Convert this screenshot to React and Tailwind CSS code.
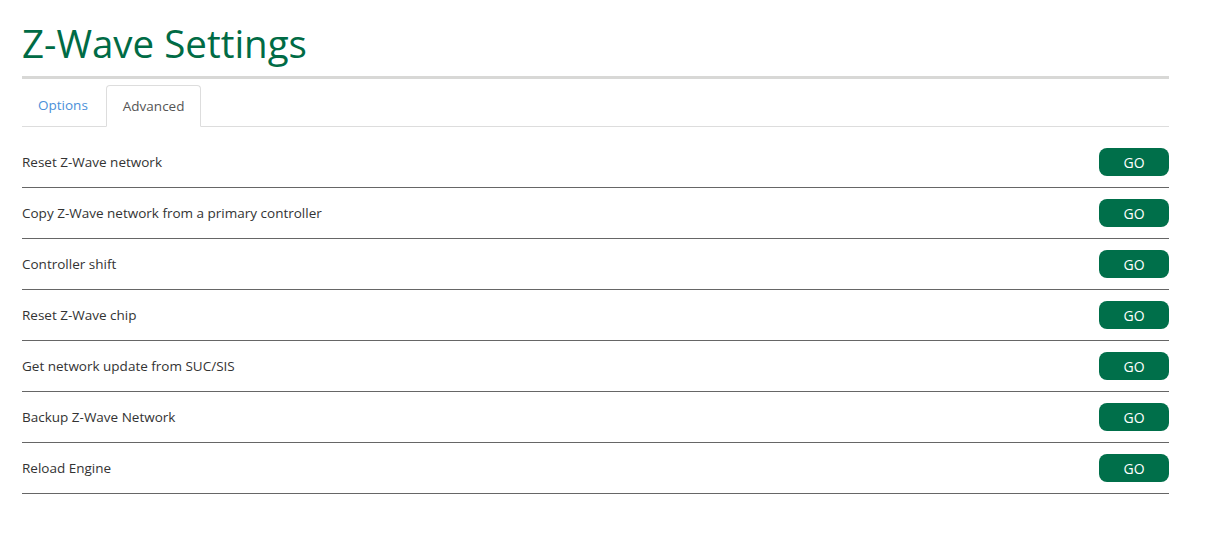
import React from "react";

const rows = [
  "Reset Z-Wave network",
  "Copy Z-Wave network from a primary controller",
  "Controller shift",
  "Reset Z-Wave chip",
  "Get network update from SUC/SIS",
  "Backup Z-Wave Network",
  "Reload Engine",
];

export default function App() {
  return (
    <div
      className="min-h-[533px] bg-white pl-[22px] pt-[17px]"
      style={{ fontFamily: '"Open Sans", sans-serif' }}
    >
      <div className="w-[1147px]">
        <h1 className="text-[38.5px] leading-[53px] text-[#006b45] font-normal">
          Z-Wave Settings
        </h1>
        <div className="mt-[6px] h-[3px] bg-[#d8d8d6]" />
        <div className="mt-[6px] flex border-b border-[#dddddd]">
          <div className="mr-[2px] h-[41px] px-[16px] flex items-center text-[13.5px] text-[#4a90d9]">
            Options
          </div>
          <div className="-mb-px h-[42px] px-[16px] flex items-center text-[13.5px] text-[#555555] bg-white border border-[#dddddd] border-b-white rounded-t-[4px]">
            Advanced
          </div>
        </div>
        <div className="pt-[10px]">
          {rows.map((r) => (
            <div
              key={r}
              className="h-[51px] flex items-center justify-between border-b border-[#666666]"
            >
              <span className="text-[13.5px] text-[#333333]">{r}</span>
              <button className="w-[70px] h-[28px] rounded-[8px] bg-[#006f4a] text-white text-[14px] flex items-center justify-center">
                GO
              </button>
            </div>
          ))}
        </div>
      </div>
    </div>
  );
}
